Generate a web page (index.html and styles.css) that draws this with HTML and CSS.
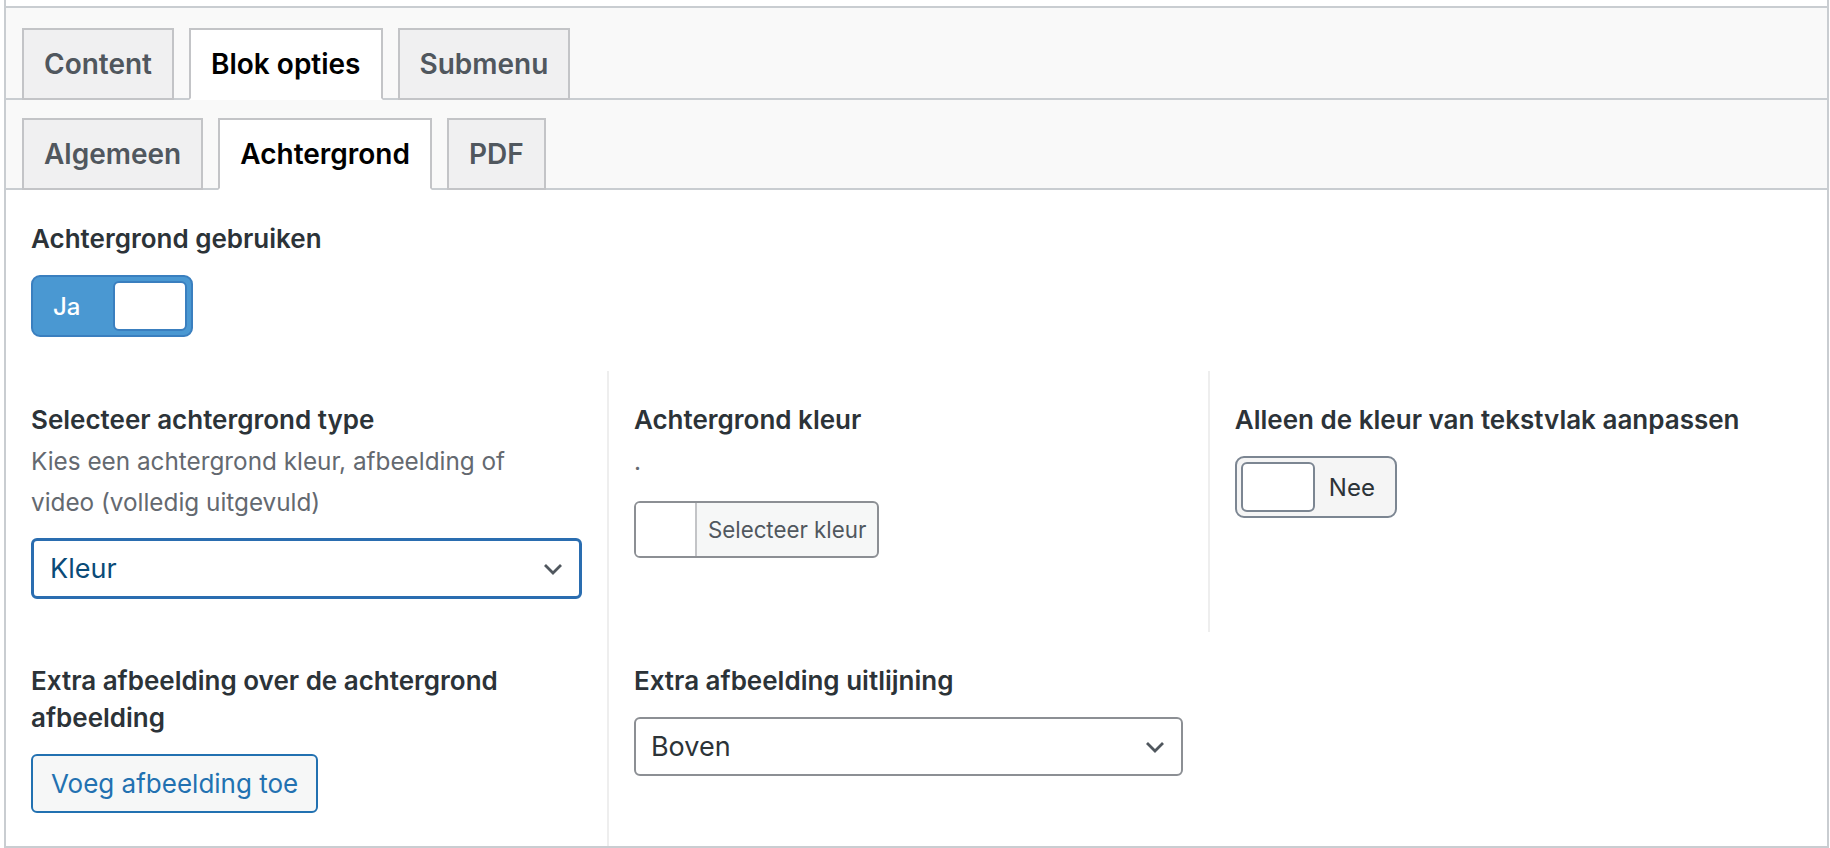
FILE: index.html
```html
<!DOCTYPE html>
<html lang="nl">
<head>
    <meta charset="UTF-8">
    <meta name="viewport" content="width=device-width, initial-scale=1.0">
    <title>Blok opties - Achtergrond</title>
    <link rel="stylesheet" href="styles.css">
</head>
<body>

    <div class="panel">

        <!-- Main tabs -->
        <nav class="tab-bar tab-bar-main">
            <a href="#" class="tab">Content</a>
            <a href="#" class="tab active">Blok opties</a>
            <a href="#" class="tab">Submenu</a>
        </nav>

        <!-- Sub tabs -->
        <nav class="tab-bar tab-bar-sub">
            <a href="#" class="tab">Algemeen</a>
            <a href="#" class="tab active">Achtergrond</a>
            <a href="#" class="tab">PDF</a>
        </nav>

        <div class="fields">

            <div class="field field-first">
                <div class="field-label">Achtergrond gebruiken</div>
                <div class="field-input">
                    <div class="switch on">
                        <span class="switch-text">Ja</span>
                        <span class="knob"></span>
                    </div>
                </div>
            </div>

            <div class="field-row">
                <div class="field">
                    <div class="field-label">Selecteer achtergrond type</div>
                    <p class="field-desc">Kies een achtergrond kleur, afbeelding of video (volledig uitgevuld)</p>
                    <div class="field-input">
                        <div class="select focus">
                            <span>Kleur</span>
                            <svg class="chevron" viewBox="0 0 20 12" width="20" height="12"><path d="M2 2 L10 10 L18 2" fill="none" stroke="#50575e" stroke-width="2.8"/></svg>
                        </div>
                    </div>
                </div>
                <div class="field">
                    <div class="field-label">Achtergrond kleur</div>
                    <p class="field-desc">.</p>
                    <div class="field-input field-input-color">
                        <div class="color-btn">
                            <span class="swatch"></span>
                            <span class="color-text">Selecteer kleur</span>
                        </div>
                    </div>
                </div>
                <div class="field">
                    <div class="field-label">Alleen de kleur van tekstvlak aanpassen</div>
                    <div class="field-input">
                        <div class="switch">
                            <span class="knob"></span>
                            <span class="switch-text">Nee</span>
                        </div>
                    </div>
                </div>
            </div>

            <div class="field-row">
                <div class="field">
                    <div class="field-label">Extra afbeelding over de achtergrond afbeelding</div>
                    <div class="field-input">
                        <a href="#" class="button">Voeg afbeelding toe</a>
                    </div>
                </div>
                <div class="field">
                    <div class="field-label">Extra afbeelding uitlijning</div>
                    <div class="field-input">
                        <div class="select">
                            <span>Boven</span>
                            <svg class="chevron" viewBox="0 0 20 12" width="20" height="12"><path d="M2 2 L10 10 L18 2" fill="none" stroke="#50575e" stroke-width="2.8"/></svg>
                        </div>
                    </div>
                </div>
                <div class="field-empty"></div>
            </div>

        </div>
    </div>

</body>
</html>
```

FILE: styles.css
```css
/* Reset and base styles */
* {
    margin: 0;
    padding: 0;
    box-sizing: border-box;
}

body {
    font-family: 'Inter', 'Noto Sans', sans-serif;
    background: #fff;
    color: #2c3338;
}

/* Outer panel */
.panel {
    margin: 0 1px 0 4px;
    padding-top: 6px;
    border: 2px solid #c9cdd1;
    border-top: none;
    background: #fff;
}

/* Tab bars */
.tab-bar {
    display: flex;
    gap: 15px;
    padding: 20px 0 0 16px;
    background: #f9f9f9;
    border-bottom: 2px solid #c9cdd1;
}

.tab-bar-main {
    border-top: 2px solid #c9cdd1;
}

.tab-bar-sub {
    padding-top: 18px;
}

.tab {
    display: block;
    padding: 19px 20px;
    margin-bottom: -2px;
    line-height: 30px;
    font-size: 28px;
    font-weight: 600;
    color: #50575e;
    text-decoration: none;
    background: #f0f0f1;
    border: 2px solid #c3c4c7;
}

.tab.active {
    background: #fff;
    color: #000;
    border-bottom-color: #fff;
}

/* Fields */
.field {
    padding: 30px 25px 33px;
}

.field-first {
    padding-bottom: 34px;
}

.field-row {
    display: grid;
    grid-template-columns: 33% 33% 34%;
}

.field-row .field + .field {
    border-left: 2px solid #eeeeee;
}

.field-label {
    font-size: 26px;
    line-height: 37px;
    font-weight: 600;
    color: #2c3338;
    margin-bottom: 3px;
}

.field-desc {
    max-width: 510px;
    font-size: 24.3px;
    line-height: 41px;
    color: #646970;
}

.field-input {
    margin-top: 15px;
}

.field-label + .field-input {
    margin-top: 18px;
}

.field-input-color {
    margin-top: 19px;
}

/* True / false switch */
.switch {
    display: inline-flex;
    align-items: center;
    gap: 14px;
    width: 162px;
    height: 62px;
    padding: 4px;
    border: 2px solid #7c8692;
    border-radius: 9px;
    background: #f5f5f5;
}

.switch .knob {
    width: 74px;
    height: 50px;
    background: #fff;
    border: 2px solid #7c8692;
    border-radius: 6px;
}

.switch-text {
    font-size: 24px;
    color: #2c3338;
}

.switch.on {
    justify-content: space-between;
    padding-left: 20px;
    background: #4a98d2;
    border-color: #3a7fbf;
}

.switch.on .knob {
    border-color: #3a7fbf;
}

.switch.on .switch-text {
    color: #fff;
    font-weight: 500;
}

/* Select boxes */
.select {
    display: flex;
    align-items: center;
    justify-content: space-between;
    height: 59px;
    padding: 0 16px 0 15px;
    font-size: 27px;
    color: #2c3338;
    background: #fff;
    border: 2px solid #8c8f94;
    border-radius: 6px;
}

.select.focus {
    height: 61px;
    padding-left: 16px;
    color: #0a4b78;
    border: 3px solid #2a6db0;
}

/* Colour picker button */
.color-btn {
    display: inline-flex;
    height: 57px;
    overflow: hidden;
    background: #f6f7f7;
    border: 2px solid #8c8f94;
    border-radius: 6px;
}

.swatch {
    width: 61px;
    background: #fff;
    border-right: 2px solid #c3c4c7;
}

.color-text {
    padding: 0 11px;
    line-height: 53px;
    font-size: 22.3px;
    color: #50575e;
}

/* Secondary button */
.button {
    display: inline-block;
    height: 59px;
    padding: 0 18px;
    line-height: 55px;
    font-size: 26px;
    color: #2271b1;
    text-decoration: none;
    background: #f6f7f7;
    border: 2px solid #2271b1;
    border-radius: 6px;
}
```
